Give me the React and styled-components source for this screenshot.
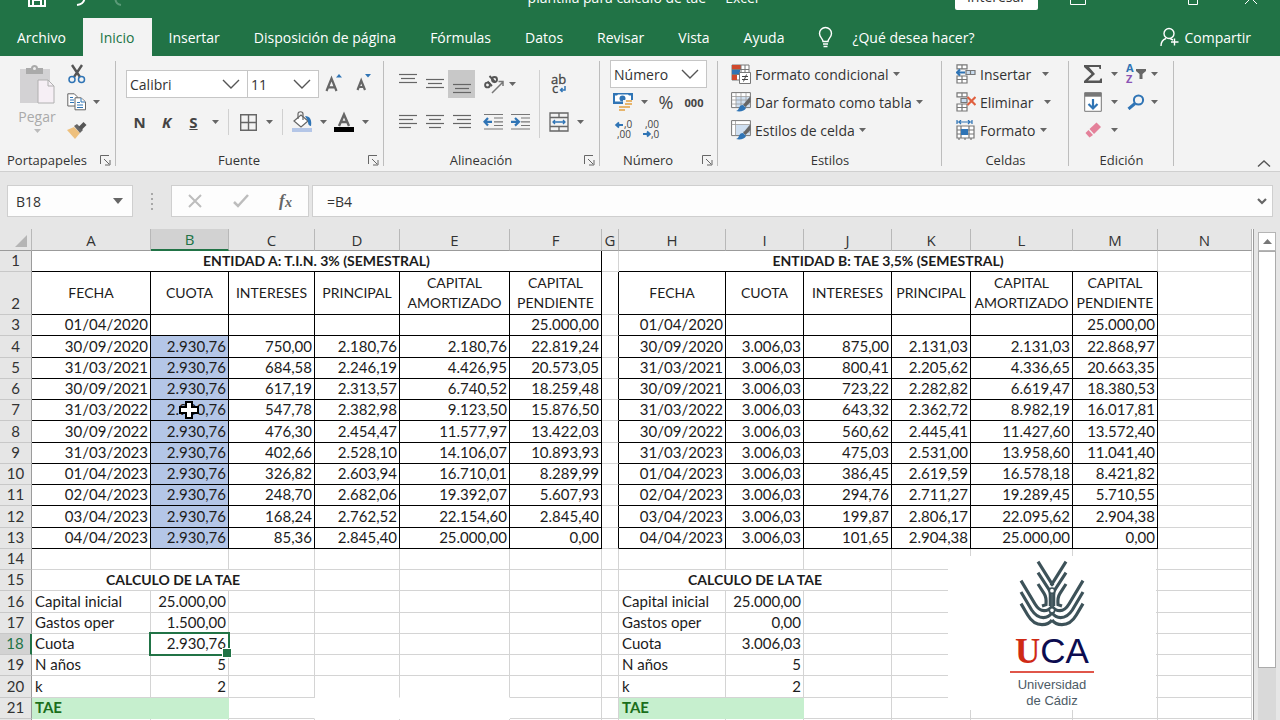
import React from 'react'
import styled, { createGlobalStyle } from 'styled-components'

const GlobalStyle = createGlobalStyle`
    * {
        box-sizing: border-box;
    }

    body {
        margin: 0;
        overflow: hidden;
        font-family: 'Open Sans', 'Noto Sans', sans-serif;
        color: #333;
    }

    button, input, select {
        font: inherit;
        color: inherit;
        margin: 0;
        padding: 0;
        border: 0;
        background: none;
        border-radius: 0;
    }
`

const green = '#217346'

const Window = styled.div`
    height: 100vh;
    display: flex;
    flex-direction: column;
    overflow: hidden;
    background: #e6e6e6;
`

/* title bar, its upper part is scrolled out of the window */

const TitleBar = styled.header`
    flex: none;
    height: 32px;
    margin-top: -14px;
    padding: 0 22px 0 28px;
    display: grid;
    grid-template-columns: 1fr auto 1fr;
    align-items: center;
    background: ${green};
    color: #fff;
    font-size: 14px;
`

const TitleTools = styled.div`
    display: flex;
    align-items: center;
    gap: ${props => props.$end ? 44 : 28}px;
    justify-content: ${props => props.$end ? 'flex-end' : 'flex-start'};
    padding-bottom: 12px;
`

const Title = styled.h1`
    margin: 0;
    font-size: 14px;
    font-weight: 400;
    line-height: 20px;
    padding-bottom: 12px;
    white-space: pre;
`

const TitleButton = styled.button`
    display: flex;
`

const SignIn = styled.button`
    height: 24px;
    padding: 0 12px 3px;
    margin-right: -12px;
    background: #fff;
    color: #333;
    line-height: 20px;
    border-radius: 2px;
`

const TabBar = styled.nav`
    flex: none;
    height: 38px;
    display: flex;
    background: ${green};
`

const Tab = styled.button`
    padding: 0 17px;
    font-size: 14px;
    color: ${props => props.$active ? green : '#fff'};
    background: ${props => props.$active ? '#f3f3f3' : 'transparent'};
    display: flex;
    align-items: center;
    gap: ${props => props.$gap || 0}px;
    white-space: nowrap;

    &:last-child {
        margin-left: auto;
        padding-right: 29px;
    }
`

const Ribbon = styled.section`
    flex: none;
    height: 116px;
    display: flex;
    background: #f3f3f3;
    border-bottom: 1px solid #cfcfcf;
`

const Group = styled.div`
    width: ${props => props.$w}px;
    display: flex;
    flex-direction: column;
    position: relative;
    padding-left: ${props => props.$pad || 0}px;

    &::after {
        content: '';
        position: absolute;
        right: 0;
        top: 5px;
        bottom: 5px;
        width: 1px;
        background: #bdbdbd;
    }
`

const GroupBody = styled.div`
    flex: 1;
    display: flex;
    padding-top: ${props => props.$top || 4}px;
`

const GroupFooter = styled.div`
    height: 22px;
    margin-left: -${props => props.$pad || 0}px;
    display: flex;
    align-items: center;
    font-size: 13px;
    line-height: 20px;
    text-align: center;

    span {
        flex: 1;
    }
`

const Stack = styled.div`
    display: flex;
    flex-direction: column;
    gap: ${props => props.$gap || 0}px;
`

const Line = styled.div`
    height: 28px;
    display: flex;
    align-items: center;
`

const Tool = styled.button`
    width: ${props => props.$w || 27}px;
    height: ${props => props.$h || 28}px;
    flex: none;
    display: flex;
    align-items: center;
    justify-content: center;
    background: ${props => props.$on ? '#c8c8c8' : 'transparent'};
    margin-right: ${props => props.$after || 0}px;
    font-size: ${props => props.$size || 15}px;
    color: #444;
`

const LabelTool = styled.button`
    height: 28px;
    display: flex;
    align-items: center;
    gap: 4px;
    font-size: 14px;
    color: #333;
    white-space: nowrap;
`

const PasteTool = styled.button`
    width: 42px;
    display: flex;
    flex-direction: column;
    align-items: center;
    color: #aaa;
    font-size: 14px;
    line-height: 24px;
    margin: 5px 8px 0 16px;
    height: 80px;
`

const Divider = styled.span`
    width: 1px;
    height: ${props => props.$h || 26}px;
    margin: 0 6px 0 5px;
    background: #d0d0d0;
`

const SelectBox = styled.label`
    display: grid;
    grid-template-columns: 1fr 26px;
    align-items: center;
    width: ${props => props.$w}px;
    height: 28px;
    margin-left: ${props => props.$joined ? -1 : 0}px;
    background: #fff;
    border: 1px solid #c6c6c6;

    select {
        grid-area: 1 / 1 / 2 / 3;
        width: 100%;
        height: 26px;
        padding-left: 3px;
        appearance: none;
        font-size: 14px;
    }

    svg {
        grid-area: 1 / 2;
        pointer-events: none;
    }
`

const Collapse = styled.button`
    margin: auto 8px 3px auto;
    display: flex;
`

const FormulaBar = styled.section`
    flex: none;
    display: flex;
    padding: 13px 7px 12px;
    height: 57px;
    font-size: 15px;
`

const Field = styled.div`
    height: 32px;
    display: flex;
    align-items: center;
    background: #fdfdfd;
    border: 1px solid #cfcfcf;
    ${props => props.$w ? `width: ${props.$w}px;` : 'flex: 1;'}
    padding-right: ${props => props.$end || 0}px;
    margin-right: ${props => props.$after || 0}px;

    input {
        flex: 1;
        min-width: 0;
        height: 28px;
        padding-left: ${props => props.$inset || 8}px;
        font-size: 14px;
    }
`

const Dots = styled.span`
    width: 38px;
    display: flex;
    flex-direction: column;
    align-items: center;
    justify-content: center;
    gap: 3px;

    i {
        width: 2px;
        height: 2px;
        background: #a8a8a8;
    }
`

const Work = styled.main`
    flex: 1;
    min-height: 0;
    display: flex;
`

const Sheet = styled.div`
    flex: 1;
    position: relative;
    overflow: hidden;
    background: #fff;
    border-right: 1px solid #9b9b9b;
    padding-right: 1px;
`

const Grid = styled.table`
    width: 100%;
    table-layout: fixed;
    border-collapse: separate;
    border-spacing: 0;
    font-family: Lato, 'Open Sans', sans-serif;
    font-size: 15px;
    line-height: 18px;
    color: #1c1c1c;

    tbody tr {
        height: 21px;
    }

    tbody tr:nth-child(2) {
        height: 43px;
    }

    tbody tr:nth-child(4n) {
        height: 22px;
    }
`

const ColHead = styled.th`
    height: 22px;
    padding: 0;
    font-family: 'Open Sans', sans-serif;
    font-weight: 400;
    font-size: 15px;
    color: ${props => props.$on ? green : '#333'};
    background: ${props => props.$on ? '#d2d2d2' : '#e6e6e6'};
    border-right: 1px solid #b8b8b8;
    border-bottom: ${props => props.$on ? `2px solid ${green}` : '1px solid #9b9b9b'};

    svg {
        display: block;
        margin: 2px 4px 0 auto;
    }
`

const RowHead = styled.th`
    padding: 0 0 2px;
    font-weight: 400;
    vertical-align: bottom;
    color: ${props => props.$on ? green : '#333'};
    background: ${props => props.$on ? '#d2d2d2' : '#e6e6e6'};
    border-right: ${props => props.$on ? `2px solid ${green}` : '1px solid #9b9b9b'};
    border-bottom: 1px solid #c8c8c8;
`

const lineColor = (kind, fill) => {
    if (kind === 'dark') return '#000'
    if (kind === 'none') return fill || '#fff'
    return '#d4d4d4'
}

const Cell = styled.td`
    position: relative;
    padding: 0 2px 2px 3px;
    white-space: nowrap;
    text-align: ${props => props.$align || 'right'};
    font-weight: ${props => props.$bold ? 700 : 400};
    background: ${props => props.$fill || '#fff'};
    color: ${props => props.$ink || 'inherit'};
    border-right: 1px solid ${props => lineColor(props.$right, props.$fill)};
    border-bottom: 1px solid ${props => lineColor(props.$bottom, props.$fill)};
`

const HeadCell = styled(Cell)`
    padding: 0;
    font-size: 14px;
    line-height: 20px;
    text-align: center;
    white-space: pre-line;
`

const Selection = styled.span`
    position: absolute;
    inset: -2px;
    z-index: 1;
    border: 2px solid ${green};

    &::after {
        content: '';
        position: absolute;
        right: -4px;
        bottom: -4px;
        width: 8px;
        height: 8px;
        background: ${green};
        border: 1px solid #fff;
    }
`

const Pointer = styled.svg`
    position: absolute;
    left: 27px;
    top: 0;
    z-index: 1;
`

const Logo = styled.figure`
    position: absolute;
    left: 948px;
    top: 327px;
    width: 208px;
    height: 154px;
    margin: 0;
    padding-top: 4px;
    background: #fff;
    display: flex;
    flex-direction: column;
    align-items: center;
    font-family: 'Liberation Sans', sans-serif;
    color: #4d5b66;
`

const LogoName = styled.div`
    display: flex;
    align-items: baseline;
    height: 41px;
    line-height: 41px;
    font-size: 35px;
    color: #0c0c50;

    b {
        font-family: 'Liberation Serif', serif;
        font-weight: 700;
        color: #cf2a15;
    }
`

const LogoText = styled.figcaption`
    width: 84px;
    border-top: 2px solid #e0564a;
    padding-top: 4px;
    font-size: 13px;
    line-height: 16px;
    text-align: center;
`

const ScrollBar = styled.div`
    width: 26px;
    padding: 3px 4px 0;
    display: flex;
    flex-direction: column;
    background: #e6e6e6;
`

const ScrollUp = styled.button`
    height: 19px;
    display: grid;
    place-items: center;
    background: #fff;
    border: 1px solid #b5b5b5;
`

const ScrollTrack = styled.div`
    flex: 1;
    background: #d9d9d9;
`

const ScrollThumb = styled.div`
    height: 89%;
    background: #fff;
    border: 1px solid #ababab;
`

/* icons */

const Caret = ({ color = '#666' }) => (
    <svg width="7" height="4" viewBox="0 0 7 4"><path d="M0 0h7L3.5 4z" fill={color} /></svg>
)

const CaretTool = ({ w = 16, label }) => <Tool $w={w} aria-label={label}><Caret /></Tool>

const Chevron = () => (
    <svg width="20" height="12" viewBox="0 0 20 12"><path d="M2 2l8 8 8-8" fill="none" stroke="#555" strokeWidth="1.4" /></svg>
)

const Launcher = () => (
    <svg width="11" height="11" viewBox="0 0 11 11" fill="none" stroke="#666"><path d="M.5 9V.5H9M4 4l5 5M10 5v5H5" /></svg>
)

const Scissors = () => (
    <svg width="20" height="20" viewBox="0 0 20 20" fill="none">
        <path d="M5 1l8 12M15 1L7 13" stroke="#555" strokeWidth="2.4" />
        <circle cx="5" cy="15.5" r="3" stroke="#2f74b5" strokeWidth="1.5" />
        <circle cx="14.5" cy="15.5" r="3" stroke="#2f74b5" strokeWidth="1.5" />
    </svg>
)

const Copy = () => (
    <svg width="20" height="18" viewBox="0 0 20 18" fill="#fff" stroke="#666">
        <path d="M.8.8h6.5L10 3.5v9.5H.8z" />
        <path d="M3 4.5h3M3 7h4M3 9.5h4" stroke="#2f74b5" />
        <path d="M8 4.8h6l4.5 4v8H8z" />
        <path d="M14 5v4h4M10 9.5h3M10 12h6M10 14.5h6" stroke="#2f74b5" />
    </svg>
)

const Brush = () => (
    <svg width="20" height="18" viewBox="0 0 20 18">
        <path d="M0 9l7-3 6 6-5 6z" fill="#eec07d" />
        <path d="M7 5l3-2 6 6-3 3z" fill="#666" />
        <path d="M11.5 6l5-5 3 3-5 5z" fill="#555" />
    </svg>
)

const Clipboard = () => (
    <svg width="36" height="40" viewBox="0 0 36 40">
        <path d="M1 4h30v34H1z" fill="#d3d2d4" />
        <path d="M7 3h5c0-4 7-4 7 0h5v6H7z" fill="#aaa" />
        <circle cx="15.5" cy="3.5" r="1.5" fill="#eee" />
        <path d="M19 15h10l6 6v17H19z" fill="#f6eff5" stroke="#b0b0b0" />
        <path d="M29 15v6h6" fill="none" stroke="#b0b0b0" />
    </svg>
)

const GrowFont = ({ down }) => (
    <svg width="20" height="22" viewBox="0 0 20 22">
        <path d={down ? 'M4.5 17l3.700-9.500L12 17M5.500 14h5.500' : 'M2.500 18L7.500 5.500 12.500 18M4 14.300h7'} fill="none" stroke="#666" strokeWidth="2.2" />
        <path d={down ? 'M12 1h6l-3 3.500z' : 'M12 4.500h6L15 1z'} fill="#2f74b5" />
    </svg>
)

const Borders = () => (
    <svg width="17" height="17" viewBox="0 0 17 17" fill="none" stroke="#666"><path d="M.7.7h15.600v15.600H.7zM8.500 1v15M1 8.500h15" strokeWidth="1.4" /></svg>
)

const Bucket = () => (
    <svg width="22" height="22" viewBox="0 0 22 22">
        <path d="M3 10l7-6 7 6-7 6z" fill="#fff" stroke="#666" strokeWidth="1.2" />
        <path d="M7 8V3c0-3 5-3 5 0v6" fill="none" stroke="#666" strokeWidth="1.2" />
        <path d="M14 5c5 0 7 4 6 10-3 0-3-4-3-5z" fill="#2f74b5" />
        <path d="M1 17h20v4H1z" fill="#b4c6e7" />
    </svg>
)

const FontColor = () => (
    <svg width="20" height="22" viewBox="0 0 20 22">
        <path d="M5 15L10 3.500 15 15M7 11h6" fill="none" stroke="#666" strokeWidth="2.4" />
        <path d="M0 16h20v5H0z" fill="#000" />
    </svg>
)

/* horizontal bars, each given as [y, x1, x2] */
const Bars = ({ lines }) => (
    <svg width="20" height="22" viewBox="0 0 20 22" stroke="#666" strokeWidth="1.2">
        {lines.map(([y, a, b]) => <path key={y} d={`M${a} ${y}.5H${b}`} />)}
    </svg>
)

const Orientation = () => (
    <svg width="22" height="22" viewBox="0 0 22 22">
        <g fill="none" stroke="#555" strokeWidth="1.9">
            <circle cx="4.500" cy="12" r="2.400" />
            <path d="M4.500 8.500l4.500 4.500M6.500 3l6 6.500" />
            <circle cx="11.500" cy="6.500" r="2.500" />
            <path d="M9 20L20 9M15.500 8.500H20V13" stroke="#777" strokeWidth="1.5" />
        </g>
    </svg>
)

const Indent = ({ flip }) => (
    <svg width="21" height="18" viewBox="0 0 21 18">
        <path d="M1 1.500h19M11 5h9M11 8.800h9M11 12.500h9M1 16h19" stroke="#777" strokeWidth="1.2" />
        <path d={flip ? 'M1 8.800h7M5 5l4 3.800-4 3.800' : 'M2 8.800h7M5 5L1.500 8.800 5 12.600'} fill="none" stroke="#2f74b5" strokeWidth="2.2" />
    </svg>
)

const WrapText = () => (
    <svg width="20" height="26" viewBox="0 0 20 26" fill="#444" stroke="#444" strokeWidth=".3" fontSize="13">
        <text x="2" y="13">ab</text>
        <text x="3" y="22">c</text>
        <path d="M16 15v4h-4M13.500 17L11.500 19l2 2" fill="none" stroke="#2f74b5" strokeWidth="1.5" />
    </svg>
)

const Merge = () => (
    <svg width="20" height="20" viewBox="0 0 20 20" fill="none" stroke="#666" strokeWidth="1.3">
        <path d="M1 1h18v18H1zM1 5.500h18M1 14.500h18M10 1v4.500M10 14.500V19" />
        <path d="M4 10h12M6 8l-2 2 2 2M14 8l2 2-2 2" stroke="#2f74b5" />
    </svg>
)

const Currency = () => (
    <svg width="22" height="20" viewBox="0 0 22 20">
        <path d="M1 1h20v11H1z" fill="#2f74b5" />
        <path d="M3 3.500h2l1-1h10l1 1h2v6H3z" fill="#fff" />
        <circle cx="10.5" cy="6.5" r="3" fill="#2f74b5" />
        <path d="M11 8h10v9H11z" fill="#f3f3f3" />
        <path d="M14 9h6M13 12h7M7 15h7M13 15h5M7 18h6" stroke="#e7b56c" strokeWidth="2.2" />
    </svg>
)

const Decimals = ({ less }) => (
    <svg width="20" height="22" viewBox="0 0 20 22" fontSize="10" fill="#444">
        <text x={less ? 4 : 10} y="9">{less ? ',00' : ',0'}</text>
        <text x={less ? 10 : 3} y="19">{less ? ',0' : ',00'}</text>
        <path d={less ? 'M2 15h7M6 12.500L8.800 15 6 17.500' : 'M2 6h7M5 3.500L2.200 6 5 8.500'} fill="none" stroke="#2f74b5" strokeWidth="1.9" />
    </svg>
)

const Conditional = () => (
    <svg width="20" height="20" viewBox="0 0 20 20">
        <path d="M1 1h17v15H1z" fill="#fff" stroke="#777" />
        <path d="M1 1h9v4H1z" fill="#d0492c" />
        <path d="M1 6h8v4H1z" fill="#2f74b5" />
        <path d="M1 11h5v5H1z" fill="#d0492c" />
        <path d="M1 5.500h17M1 10.500h17M10 1v15M14 1v15" stroke="#777" />
        <path d="M8.500 8.500h11v11h-11z" fill="#fff" stroke="#777" />
        <path d="M11 12.500h6M11 15.500h6M15.500 10.500l-3 7" stroke="#444" />
    </svg>
)

const TableBrush = ({ plain }) => (
    <svg width="20" height="20" viewBox="0 0 20 20">
        <path d="M.6.6h18.800v15H.6z" fill="#fff" stroke="#777" />
        <path d="M5 5h14v10H5z" fill="#cfdff0" />
        <path d={plain ? 'M.6 4.500h18.800M4.500 1v14.500M12 12h7' : 'M.6 4.500h18.800M.6 8h18.800M.6 12h18.800M5 1v14.500M10 1v14.500M15 1v14.500'} stroke="#999" strokeWidth=".8" />
        <path d="M19.500 4v6l-5 5-2.500-2z" fill="#666" />
        <path d="M5 19c4-1 2-6 7-6l3 3c-1 3-6 4-10 3z" fill="#2f74b5" />
    </svg>
)

const CellsIcon = ({ kind }) => (
    <svg width="20" height="20" viewBox="0 0 20 20" fill="none" stroke="#777" strokeWidth="1.2">
        {kind === 'format' ? (
            <>
                <path d="M1 2h15M1 0v4M16 0v4M5 0L3 2l2 2M12 0l2 2-2 2" stroke="#2f74b5" />
                <path d="M1 6h17v12H1zM1 10h17M1 14h17M5 6v12M13 6v12" fill="#fff" />
                <path d="M5 9h7v6H5z" fill="#2f74b5" stroke="none" />
                <path d="M3 18v2M9 18v2M15 18v2" />
            </>
        ) : (
            <>
                <path d="M1 .8h10v4H1zM6 1v4M1 12h10v7H1zM6 12v7M1 15.500h10" fill="#fff" />
                {kind === 'insert'
                    ? <path d="M10 6.500h9v4h-9zM14.500 6.500v4" fill="#c9dcef" />
                    : <path d="M5 6.500h6v4H5z" fill="#c9dcef" />}
                {kind === 'insert'
                    ? <path d="M1 8.500h8M4 5.500l-3 3 3 3" stroke="#2f74b5" strokeWidth="2" />
                    : <path d="M11.500 5l8 8M19.500 5l-8 8" stroke="#e0603f" strokeWidth="2.2" />}
            </>
        )}
    </svg>
)

const Sigma = () => (
    <svg width="20" height="20" viewBox="0 0 20 20"><path d="M1 1h17v4h-1.500L16 3H6l6 7-7 6.500h11.500l1-2H19V19H1v-2l7.500-7L1 3z" fill="#555" /></svg>
)

const SortFilter = () => (
    <svg width="22" height="24" viewBox="0 0 22 24" fontSize="11" fontWeight="700">
        <text x="1" y="10" fill="#2f74b5">A</text>
        <text x="1" y="21" fill="#8a53b5">Z</text>
        <path d="M11 7h10v2l-3.500 3v5h-3v-5L11 9z" fill="#666" />
    </svg>
)

const Fill = () => (
    <svg width="18" height="20" viewBox="0 0 18 20">
        <path d="M.7.7h16.600v18.600H.7z" fill="#fff" stroke="#777" />
        <path d="M.7.7h16.600v4H.7z" fill="#777" />
        <path d="M9 7v9M4.500 12L9 16.500l4.500-4.500" fill="none" stroke="#2f74b5" strokeWidth="2.2" />
    </svg>
)

const Search = () => (
    <svg width="18" height="16" viewBox="0 0 18 16" fill="none" stroke="#2f74b5">
        <circle cx="11.5" cy="6" r="4.6" strokeWidth="2" />
        <path d="M8 9.500l-6.500 5.500" strokeWidth="3" />
    </svg>
)

const Eraser = () => (
    <svg width="18" height="18" viewBox="0 0 18 18">
        <path d="M5.500 8L12.500 1.500l4.500 4.500-7 7z" fill="#e4819a" />
        <path d="M4.500 9L1.500 12l4 4.500 3.500-2.500z" fill="#e4819a" />
    </svg>
)

const Bulb = () => (
    <svg width="15" height="22" viewBox="0 0 15 22" fill="none" stroke="#fff" strokeWidth="1.4">
        <path d="M5 15.500c0-3-3.500-4-3.500-8a6 6 0 0 1 12 0c0 4-3.500 5-3.500 8zM5 18h5M5.500 20.500h4" />
    </svg>
)

const Share = () => (
    <svg width="19" height="20" viewBox="0 0 19 20" fill="none" stroke="#fff" strokeWidth="1.4">
        <circle cx="9" cy="6.5" r="5" />
        <path d="M1 19c0-4 2-6.500 5-7.500M10 11.500l3 1.500M14.500 11.500v7M11 15h7.500" />
    </svg>
)

const Wings = () => {
    const half = (
        <>
            <path d="M243 122l42 70q12 20 27 20t24-13" />
            <path d="M243 156l32 54q15 23 35 23 16 0 26-15" />
            <path d="M243 191l20 34q17 29 43 29 20 0 30-14" />
            <path d="M294 65l45 72" />
            <path d="M294 98l30 46q7 8 7 22v32" />
            <path d="M294 132l18 28q8 12 6 34l-12 4" />
        </>
    )
    return (
        <svg width="70" height="70" viewBox="231 60 210 210" fill="none" stroke="#3d5259" strokeWidth="9.5">
            <g>{half}</g>
            <g transform="translate(672 0) scale(-1 1)">{half}</g>
            <circle cx="336" cy="152" r="8" fill="#fff" strokeWidth="5" />
            <circle cx="336" cy="211" r="8" fill="#fff" strokeWidth="5" />
        </svg>
    )
}

/* sheet data */

const columns = [
    ['A', 119], ['B', 78], ['C', 86], ['D', 85], ['E', 110], ['F', 92], ['G', 17],
    ['H', 107], ['I', 78], ['J', 88], ['K', 79], ['L', 102], ['M', 85], ['N', null],
]

const headings = ['FECHA', 'CUOTA', 'INTERESES', 'PRINCIPAL', 'CAPITAL\nAMORTIZADO', 'CAPITAL\nPENDIENTE']

const schedule = [
    ['01/04/2020', ['', '', '', '', '25.000,00'], ['', '', '', '', '25.000,00']],
    ['30/09/2020', ['2.930,76', '750,00', '2.180,76', '2.180,76', '22.819,24'], ['3.006,03', '875,00', '2.131,03', '2.131,03', '22.868,97']],
    ['31/03/2021', ['2.930,76', '684,58', '2.246,19', '4.426,95', '20.573,05'], ['3.006,03', '800,41', '2.205,62', '4.336,65', '20.663,35']],
    ['30/09/2021', ['2.930,76', '617,19', '2.313,57', '6.740,52', '18.259,48'], ['3.006,03', '723,22', '2.282,82', '6.619,47', '18.380,53']],
    ['31/03/2022', ['2.930,76', '547,78', '2.382,98', '9.123,50', '15.876,50'], ['3.006,03', '643,32', '2.362,72', '8.982,19', '16.017,81']],
    ['30/09/2022', ['2.930,76', '476,30', '2.454,47', '11.577,97', '13.422,03'], ['3.006,03', '560,62', '2.445,41', '11.427,60', '13.572,40']],
    ['31/03/2023', ['2.930,76', '402,66', '2.528,10', '14.106,07', '10.893,93'], ['3.006,03', '475,03', '2.531,00', '13.958,60', '11.041,40']],
    ['01/04/2023', ['2.930,76', '326,82', '2.603,94', '16.710,01', '8.289,99'], ['3.006,03', '386,45', '2.619,59', '16.578,18', '8.421,82']],
    ['02/04/2023', ['2.930,76', '248,70', '2.682,06', '19.392,07', '5.607,93'], ['3.006,03', '294,76', '2.711,27', '19.289,45', '5.710,55']],
    ['03/04/2023', ['2.930,76', '168,24', '2.762,52', '22.154,60', '2.845,40'], ['3.006,03', '199,87', '2.806,17', '22.095,62', '2.904,38']],
    ['04/04/2023', ['2.930,76', '85,36', '2.845,40', '25.000,00', '0,00'], ['3.006,03', '101,65', '2.904,38', '25.000,00', '0,00']],
]

const summary = [
    ['Capital inicial', '25.000,00', '25.000,00'],
    ['Gastos oper', '1.500,00', '0,00'],
    ['Cuota', '2.930,76', '3.006,03'],
    ['N años', '5', '5'],
    ['k', '2', '2'],
]

const Blank = ({ n }) => Array.from({ length: n }, (_, i) => <Cell key={i} />)

const ScheduleRow = ({ number, row: [date, a, b] }) => (
    <tr>
        <RowHead scope="row">{number}</RowHead>
        <Cell $right="dark" $bottom="dark">{date}</Cell>
        {a.map((value, i) => (
            <Cell key={i} $right="dark" $bottom="dark" $fill={i === 0 && value ? '#b4c6e7' : undefined}>
                {value}
                {i === 0 && number === 7 && (
                    <Pointer width="22" height="20" viewBox="0 0 22 20">
                        <path d="M8 2h6v5h6v6h-6v5H8v-5H2V7h6z" fill="#fff" stroke="#000" strokeWidth="2" />
                    </Pointer>
                )}
            </Cell>
        ))}
        <Cell $right="dark" />
        <Cell $right="dark" $bottom="dark">{date}</Cell>
        {b.map((value, i) => <Cell key={i} $right="dark" $bottom="dark">{value}</Cell>)}
        <Cell />
    </tr>
)

const SummaryRow = ({ number, row: [label, a, b] }) => {
    const cut = number === 20 ? 'none' : undefined
    return (
        <tr>
            <RowHead scope="row" $on={number === 18}>{number}</RowHead>
            <Cell $align="left">{label}</Cell>
            <Cell>{a}{number === 18 && <Selection />}</Cell>
            <Cell />
            <Cell $bottom={cut} />
            <Cell $bottom={cut} />
            <Cell />
            <Cell />
            <Cell $align="left">{label}</Cell>
            <Cell>{b}</Cell>
            <Blank n={5} />
        </tr>
    )
}

const Spreadsheet = () => (
    <Sheet>
        <Grid>
            <colgroup>
                <col style={{ width: 32 }} />
                {columns.map(([name, width]) => <col key={name} style={width ? { width } : undefined} />)}
            </colgroup>
            <thead>
                <tr>
                    <ColHead><svg width="12" height="12" viewBox="0 0 12 12"><path d="M12 0v12H0z" fill="#b5b5b5" /></svg></ColHead>
                    {columns.map(([name]) => <ColHead key={name} scope="col" $on={name === 'B'}>{name}</ColHead>)}
                </tr>
            </thead>
            <tbody>
                <tr>
                    <RowHead scope="row">1</RowHead>
                    <HeadCell colSpan={6} $bold $right="dark" $bottom="dark">ENTIDAD A: T.I.N. 3% (SEMESTRAL)</HeadCell>
                    <Cell />
                    <HeadCell colSpan={6} $bold $bottom="dark">ENTIDAD B: TAE 3,5% (SEMESTRAL)</HeadCell>
                    <Cell />
                </tr>
                <tr>
                    <RowHead scope="row">2</RowHead>
                    {headings.map(name => <HeadCell key={name} $right="dark" $bottom="dark">{name}</HeadCell>)}
                    <Cell $right="dark" />
                    {headings.map(name => <HeadCell key={name} $right="dark" $bottom="dark">{name}</HeadCell>)}
                    <Cell />
                </tr>
                {schedule.map((row, i) => <ScheduleRow key={row[0]} number={i + 3} row={row} />)}
                <tr>
                    <RowHead scope="row">14</RowHead>
                    <Blank n={14} />
                </tr>
                <tr>
                    <RowHead scope="row">15</RowHead>
                    <HeadCell colSpan={3} $bold>CALCULO DE LA TAE</HeadCell>
                    <Blank n={4} />
                    <HeadCell colSpan={3} $bold>CALCULO DE LA TAE</HeadCell>
                    <Blank n={4} />
                </tr>
                {summary.map((row, i) => <SummaryRow key={row[0]} number={i + 16} row={row} />)}
                <tr>
                    <RowHead scope="row">21</RowHead>
                    <Cell colSpan={2} $align="left" $bold $fill="#c6efce" $ink="#1b6e1b" $right="none" $bottom="none">TAE</Cell>
                    <Cell $right="none" />
                    <Cell $right="none" $bottom="none" />
                    <Cell $right="none" $bottom="none" />
                    <Cell />
                    <Cell />
                    <Cell colSpan={2} $align="left" $bold $fill="#c6efce" $ink="#1b6e1b" $right="none" $bottom="none">TAE</Cell>
                    <Blank n={5} />
                </tr>
                <tr>
                    <RowHead scope="row" />
                    <Blank n={14} />
                </tr>
            </tbody>
        </Grid>
        <Logo>
            <Wings />
            <LogoName><b>U</b>CA</LogoName>
            <LogoText>Universidad<br />de Cádiz</LogoText>
        </Logo>
    </Sheet>
)

const RibbonGroup = ({ name, w, pad, top, launcher, children }) => (
    <Group $w={w} $pad={pad}>
        <GroupBody $top={top}>{children}</GroupBody>
        <GroupFooter $pad={pad}>
            <span>{name}</span>
            {launcher && <Tool $w={22} $h={20} aria-label={`Más opciones de ${name}`}><Launcher /></Tool>}
        </GroupFooter>
    </Group>
)

const App = () => (
    <Window>
        <GlobalStyle />
        <TitleBar>
            <TitleTools>
                <TitleButton aria-label="Guardar">
                    <svg width="18" height="18" viewBox="0 0 18 18" fill="none" stroke="#fff" strokeWidth="2"><path d="M1 1h16v16H1zM5 17v-6h8v6" /></svg>
                </TitleButton>
                <TitleButton aria-label="Deshacer">
                    <svg width="12" height="18" viewBox="0 0 12 18" fill="none" stroke="#fff" strokeWidth="2"><path d="M1 6h6c5 0 5 9-4 10" /></svg>
                </TitleButton>
                <TitleButton aria-label="Rehacer">
                    <svg width="12" height="18" viewBox="0 0 12 18" fill="none" stroke="#5b9a78" strokeWidth="2"><path d="M11 6H5c-5 0-5 9 2 10" /></svg>
                </TitleButton>
            </TitleTools>
            <Title>plantilla para calculo de tae  -  Excel</Title>
            <TitleTools $end>
                <SignIn>Interesar</SignIn>
                <TitleButton aria-label="Opciones de cinta">
                    <svg width="16" height="16" viewBox="0 0 16 16" fill="none" stroke="#fff"><path d="M.5 1.500h15v13H.5z" /></svg>
                </TitleButton>
                <TitleButton aria-label="Minimizar">
                    <svg width="14" height="14" viewBox="0 0 14 14" stroke="#fff"><path d="M1 7.500h12" /></svg>
                </TitleButton>
                <TitleButton aria-label="Restaurar">
                    <svg width="12" height="14" viewBox="0 0 12 14" fill="none" stroke="#fff"><path d="M.5 3.500h9v10h-9z" /></svg>
                </TitleButton>
                <TitleButton aria-label="Cerrar">
                    <svg width="14" height="14" viewBox="0 0 14 14" stroke="#fff"><path d="M1 1l12 12M13 1L1 13" /></svg>
                </TitleButton>
            </TitleTools>
        </TitleBar>
        <TabBar>
            {['Archivo', 'Inicio', 'Insertar', 'Disposición de página', 'Fórmulas', 'Datos', 'Revisar', 'Vista', 'Ayuda'].map(name => (
                <Tab key={name} $active={name === 'Inicio'}>{name}</Tab>
            ))}
            <Tab $gap={19}><Bulb />¿Qué desea hacer?</Tab>
            <Tab $gap={5}><Share />Compartir</Tab>
        </TabBar>
        <Ribbon>
            <RibbonGroup name="Portapapeles" w={116} launcher>
                <PasteTool>
                    <Clipboard />
                    Pegar
                    <Caret color="#bbb" />
                </PasteTool>
                <Stack>
                    <Line><Tool $w={22} aria-label="Cortar"><Scissors /></Tool></Line>
                    <Line><Tool $w={22} aria-label="Copiar"><Copy /></Tool><CaretTool label="Opciones de copiar" /></Line>
                    <Line><Tool $w={22} aria-label="Copiar formato"><Brush /></Tool></Line>
                </Stack>
            </RibbonGroup>
            <RibbonGroup name="Fuente" w={268} pad={10} top={14} launcher>
                <Stack $gap={10}>
                    <Line>
                        <SelectBox $w={122}><select aria-label="Fuente"><option>Calibri</option></select><Chevron /></SelectBox>
                        <SelectBox $w={72} $joined><select aria-label="Tamaño"><option>11</option></select><Chevron /></SelectBox>
                        <Tool $w={30} aria-label="Aumentar tamaño"><GrowFont /></Tool>
                        <Tool aria-label="Disminuir tamaño"><GrowFont down /></Tool>
                    </Line>
                    <Line>
                        <Tool aria-label="Negrita"><b>N</b></Tool>
                        <Tool aria-label="Cursiva"><b><i>K</i></b></Tool>
                        <Tool aria-label="Subrayado"><b><u>S</u></b></Tool>
                        <CaretTool label="Opciones de subrayado" />
                        <Divider />
                        <Tool $w={26} aria-label="Bordes"><Borders /></Tool>
                        <CaretTool label="Opciones de bordes" />
                        <Divider />
                        <Tool $w={26} aria-label="Color de relleno"><Bucket /></Tool>
                        <CaretTool label="Opciones de relleno" />
                        <Tool $w={26} aria-label="Color de fuente"><FontColor /></Tool>
                        <CaretTool label="Opciones de color" />
                    </Line>
                </Stack>
            </RibbonGroup>
            <RibbonGroup name="Alineación" w={216} pad={10} top={14} launcher>
                <Stack $gap={10}>
                    <Line>
                        <Tool aria-label="Alinear arriba"><Bars lines={[[1, 1, 19], [5, 3, 17], [9, 1, 19]]} /></Tool>
                        <Tool aria-label="Alinear en el medio"><Bars lines={[[6, 1, 19], [10, 3, 17], [14, 1, 19]]} /></Tool>
                        <Tool $after={5} $on aria-label="Alinear abajo"><Bars lines={[[11, 1, 19], [15, 3, 17], [19, 1, 19]]} /></Tool>
                        <Tool aria-label="Orientación"><Orientation /></Tool>
                        <CaretTool w={10} label="Opciones de orientación" />
                    </Line>
                    <Line>
                        <Tool aria-label="Alinear a la izquierda"><Bars lines={[[4, 1, 19], [8, 1, 15], [12, 1, 19], [16, 1, 13]]} /></Tool>
                        <Tool aria-label="Centrar"><Bars lines={[[4, 1, 19], [8, 4, 16], [12, 1, 19], [16, 4, 16]]} /></Tool>
                        <Tool $after={5} aria-label="Alinear a la derecha"><Bars lines={[[4, 1, 19], [8, 5, 19], [12, 1, 19], [16, 7, 19]]} /></Tool>
                        <Tool aria-label="Disminuir sangría"><Indent /></Tool>
                        <Tool aria-label="Aumentar sangría"><Indent flip /></Tool>
                    </Line>
                </Stack>
                <Divider $h={68} />
                <Stack $gap={10}>
                    <Line><Tool $w={26} aria-label="Ajustar texto"><WrapText /></Tool></Line>
                    <Line>
                        <Tool $w={26} aria-label="Combinar y centrar"><Merge /></Tool>
                        <CaretTool label="Opciones de combinar" />
                    </Line>
                </Stack>
            </RibbonGroup>
            <RibbonGroup name="Número" w={118} pad={10} launcher>
                <Stack>
                    <Line><SelectBox $w={97}><select aria-label="Formato de número"><option>Número</option></select><Chevron /></SelectBox></Line>
                    <Line>
                        <Tool $w={26} aria-label="Moneda"><Currency /></Tool>
                        <CaretTool label="Opciones de moneda" />
                        <Tool $w={28} $size={18} aria-label="Porcentaje">%</Tool>
                        <Tool $w={28} $size={11} aria-label="Millares"><b>000</b></Tool>
                    </Line>
                    <Line>
                        <Tool aria-label="Aumentar decimales"><Decimals /></Tool>
                        <Tool aria-label="Disminuir decimales"><Decimals less /></Tool>
                    </Line>
                </Stack>
            </RibbonGroup>
            <RibbonGroup name="Estilos" w={224} pad={13}>
                <Stack>
                    <LabelTool><Conditional />Formato condicional<Caret /></LabelTool>
                    <LabelTool><TableBrush />Dar formato como tabla<Caret /></LabelTool>
                    <LabelTool><TableBrush plain />Estilos de celda<Caret /></LabelTool>
                </Stack>
            </RibbonGroup>
            <RibbonGroup name="Celdas" w={127} pad={14}>
                <Stack>
                    <Line><LabelTool><CellsIcon kind="insert" />Insertar</LabelTool><CaretTool w={28} label="Opciones de insertar" /></Line>
                    <Line><LabelTool><CellsIcon kind="delete" />Eliminar</LabelTool><CaretTool w={28} label="Opciones de eliminar" /></Line>
                    <LabelTool><CellsIcon kind="format" />Formato<Caret /></LabelTool>
                </Stack>
            </RibbonGroup>
            <RibbonGroup name="Edición" w={105} pad={10}>
                <Stack>
                    <Line>
                        <Tool aria-label="Autosuma"><Sigma /></Tool>
                        <CaretTool label="Opciones de autosuma" />
                        <Tool aria-label="Ordenar y filtrar"><SortFilter /></Tool>
                        <CaretTool w={10} label="Opciones de ordenar" />
                    </Line>
                    <Line>
                        <Tool aria-label="Rellenar"><Fill /></Tool>
                        <CaretTool label="Opciones de rellenar" />
                        <Tool aria-label="Buscar"><Search /></Tool>
                        <CaretTool w={10} label="Opciones de buscar" />
                    </Line>
                    <Line>
                        <Tool aria-label="Borrar"><Eraser /></Tool>
                        <CaretTool label="Opciones de borrar" />
                    </Line>
                </Stack>
            </RibbonGroup>
            <Collapse aria-label="Contraer la cinta">
                <svg width="16" height="9" viewBox="0 0 16 9"><path d="M2 7.500l6-5.500 6 5.500" fill="none" stroke="#555" strokeWidth="1.4" /></svg>
            </Collapse>
        </Ribbon>
        <FormulaBar>
            <Field $w={126} $end={6}>
                <input aria-label="Cuadro de nombres" defaultValue="B18" />
                <Tool $w={16} aria-label="Lista de nombres"><svg width="10" height="6" viewBox="0 0 10 6"><path d="M0 0h10L5 6z" fill="#666" /></svg></Tool>
            </Field>
            <Dots><i /><i /><i /><i /></Dots>
            <Field $w={138} $after={3}>
                <Tool $w={46} aria-label="Cancelar"><svg width="14" height="14" viewBox="0 0 14 14"><path d="M1 1l12 12M13 1L1 13" stroke="#bdbdbd" strokeWidth="2" /></svg></Tool>
                <Tool $w={46} aria-label="Introducir"><svg width="16" height="14" viewBox="0 0 16 14"><path d="M1 8l4 4L15 1" fill="none" stroke="#bdbdbd" strokeWidth="2.5" /></svg></Tool>
                <Tool $w={44} aria-label="Insertar función">
                    <svg width="18" height="20" viewBox="0 0 18 20" fontFamily="Liberation Serif, serif" fontStyle="italic" fontWeight="700" fill="#666">
                        <text x="2" y="15" fontSize="17">f</text>
                        <text x="8" y="16" fontSize="14">x</text>
                    </svg>
                </Tool>
            </Field>
            <Field $end={2} $inset={14}>
                <input aria-label="Barra de fórmulas" defaultValue="=B4" />
                <Tool $w={16} aria-label="Expandir barra"><svg width="10" height="7" viewBox="0 0 10 7"><path d="M1 1l4 4 4-4" fill="none" stroke="#666" strokeWidth="2.2" /></svg></Tool>
            </Field>
        </FormulaBar>
        <Work>
            <Spreadsheet />
            <ScrollBar>
                <ScrollUp aria-label="Subir"><svg width="9" height="5" viewBox="0 0 9 5"><path d="M0 5h9L4.500 0z" fill="#777" /></svg></ScrollUp>
                <ScrollTrack><ScrollThumb /></ScrollTrack>
            </ScrollBar>
        </Work>
    </Window>
)

export default App
